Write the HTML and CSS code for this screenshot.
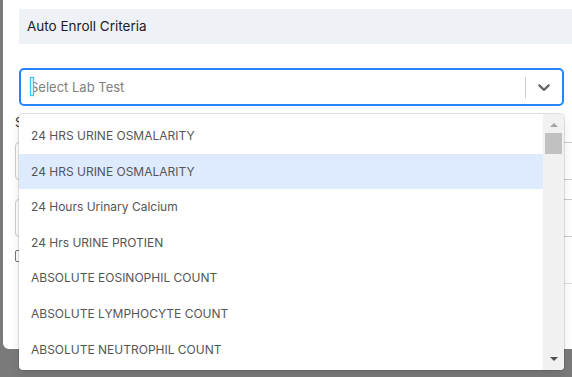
FILE: index.html
```html
<!DOCTYPE html>
<html lang="en">
<head>
  <meta charset="UTF-8" />
  <meta name="viewport" content="width=device-width, initial-scale=1.0"/>
  <title>Auto Enroll Criteria</title>
  <link rel="stylesheet" href="styles.css">
</head>
<body>

  <div class="modal">
    <div class="modal-body">
      <div class="section-title">Auto Enroll Criteria</div>

      <div class="field">
        <div class="select-control">
          <div class="value">
            <span class="caret"></span>
            <span class="placeholder">Select Lab Test</span>
          </div>
          <span class="separator"></span>
          <div class="indicator">
            <svg width="20" height="20" viewBox="0 0 20 20">
              <path fill="#666" d="M4.516 7.548c0.436-0.446 1.043-0.481 1.576 0l3.908 3.747 3.908-3.747c0.533-0.481 1.141-0.446 1.574 0 0.436 0.445 0.408 1.197 0 1.615-0.406 0.418-4.695 4.502-4.695 4.502-0.217 0.223-0.502 0.335-0.787 0.335s-0.57-0.112-0.789-0.335c0 0-4.287-4.084-4.695-4.502s-0.436-1.17 0-1.615z"/>
            </svg>
          </div>
        </div>

        <div class="menu">
          <div class="menu-list">
            <div class="option">24 HRS URINE OSMALARITY</div>
            <div class="option focused">24 HRS URINE OSMALARITY</div>
            <div class="option">24 Hours Urinary Calcium</div>
            <div class="option">24 Hrs URINE PROTIEN</div>
            <div class="option">ABSOLUTE EOSINOPHIL COUNT</div>
            <div class="option">ABSOLUTE LYMPHOCYTE COUNT</div>
            <div class="option">ABSOLUTE NEUTROPHIL COUNT</div>
          </div>
          <div class="scrollbar">
            <span class="arrow up"></span>
            <span class="thumb"></span>
            <span class="track"></span>
            <span class="arrow down"></span>
          </div>
        </div>
      </div>

      <div class="back-form">
        <div class="label">Sample Type</div>
        <div class="input"></div>
        <div class="input"></div>
        <div class="check-row">
          <span class="checkbox"></span>
        </div>
        <div class="divider"></div>
      </div>
    </div>
  </div>

</body>
</html>
```

FILE: styles.css
```css
body {
  margin: 0;
  padding: 0;
  background: #7a7a7a;
  font-family: 'Inter', 'Open Sans', sans-serif;
  height: 100vh;
  overflow: hidden;
}

.modal {
  margin-left: 3px;
  width: 620px;
  height: 349px;
  background: #ffffff;
  border-bottom-left-radius: 6px;
}

.modal-body {
  padding: 9px 0 0 16px;
}

.section-title {
  width: 560px;
  height: 35px;
  line-height: 35px;
  padding-left: 8px;
  background: #eef1f6;
  color: #1c1c2a;
  font-size: 13.5px;
  box-sizing: border-box;
}

.field {
  position: relative;
  margin-top: 24px;
  width: 545px;
  z-index: 2;
}

.select-control {
  display: flex;
  align-items: center;
  height: 38px;
  box-sizing: border-box;
  border: 2px solid #2684ff;
  border-radius: 5px;
  background: #fff;
}

.value {
  position: relative;
  flex: 1;
  align-self: stretch;
  display: flex;
  align-items: center;
  padding: 0 8px 0 9px;
}

.caret {
  position: absolute;
  left: 9px;
  top: 7px;
  width: 2px;
  height: 17px;
  border: 1px solid #3cc4ea;
  background: #d4f5ff;
  box-shadow: 0 0 2px #7fdcf5;
}

.placeholder {
  color: #808080;
  font-size: 13px;
}

.separator {
  width: 1px;
  height: 21px;
  background: #cccccc;
}

.indicator {
  display: flex;
  padding: 8px;
}

.menu {
  position: absolute;
  top: calc(100% + 8px);
  left: 0;
  right: 0;
  height: 256px;
  display: flex;
  background: #fff;
  border-radius: 4px;
  overflow: hidden;
  box-shadow: 0 0 0 1px rgba(0, 0, 0, 0.1), 0 4px 11px rgba(0, 0, 0, 0.1);
}

.menu-list {
  flex: 1;
  padding-top: 4px;
}

.option {
  padding: 8px 12px;
  line-height: 19.6px;
  font-size: 12px;
  color: #555;
}

.option.focused {
  background: #deebff;
}

.scrollbar {
  width: 21px;
  display: flex;
  flex-direction: column;
  align-items: center;
  background: #f1f1f1;
}

.arrow {
  width: 0;
  height: 0;
  border-left: 4px solid transparent;
  border-right: 4px solid transparent;
}

.arrow.up {
  margin-top: 9px;
  border-bottom: 4px solid #a3a3a3;
}

.arrow.down {
  margin-bottom: 9px;
  border-top: 4px solid #505050;
}

.thumb {
  margin-top: 6px;
  width: 17px;
  height: 21px;
  background: #c1c1c1;
}

.track {
  flex: 1;
}

.back-form {
  margin-left: -4px;
  margin-top: 6px;
  color: #333;
}

.label {
  font-size: 13px;
  height: 20px;
  line-height: 20px;
}

.input {
  width: 600px;
  height: 38px;
  box-sizing: border-box;
  margin-top: 10px;
  border: 1px solid #cccccc;
  border-radius: 4px;
}

.input + .input {
  margin-top: 19px;
}

.check-row {
  margin-top: 13px;
  height: 12px;
}

.checkbox {
  display: block;
  width: 12px;
  height: 12px;
  box-sizing: border-box;
  border: 1px solid #767676;
  border-radius: 2px;
}

.divider {
  margin-top: 21px;
  margin-left: 400px;
  width: 300px;
  height: 1px;
  background: #dddddd;
}
```
